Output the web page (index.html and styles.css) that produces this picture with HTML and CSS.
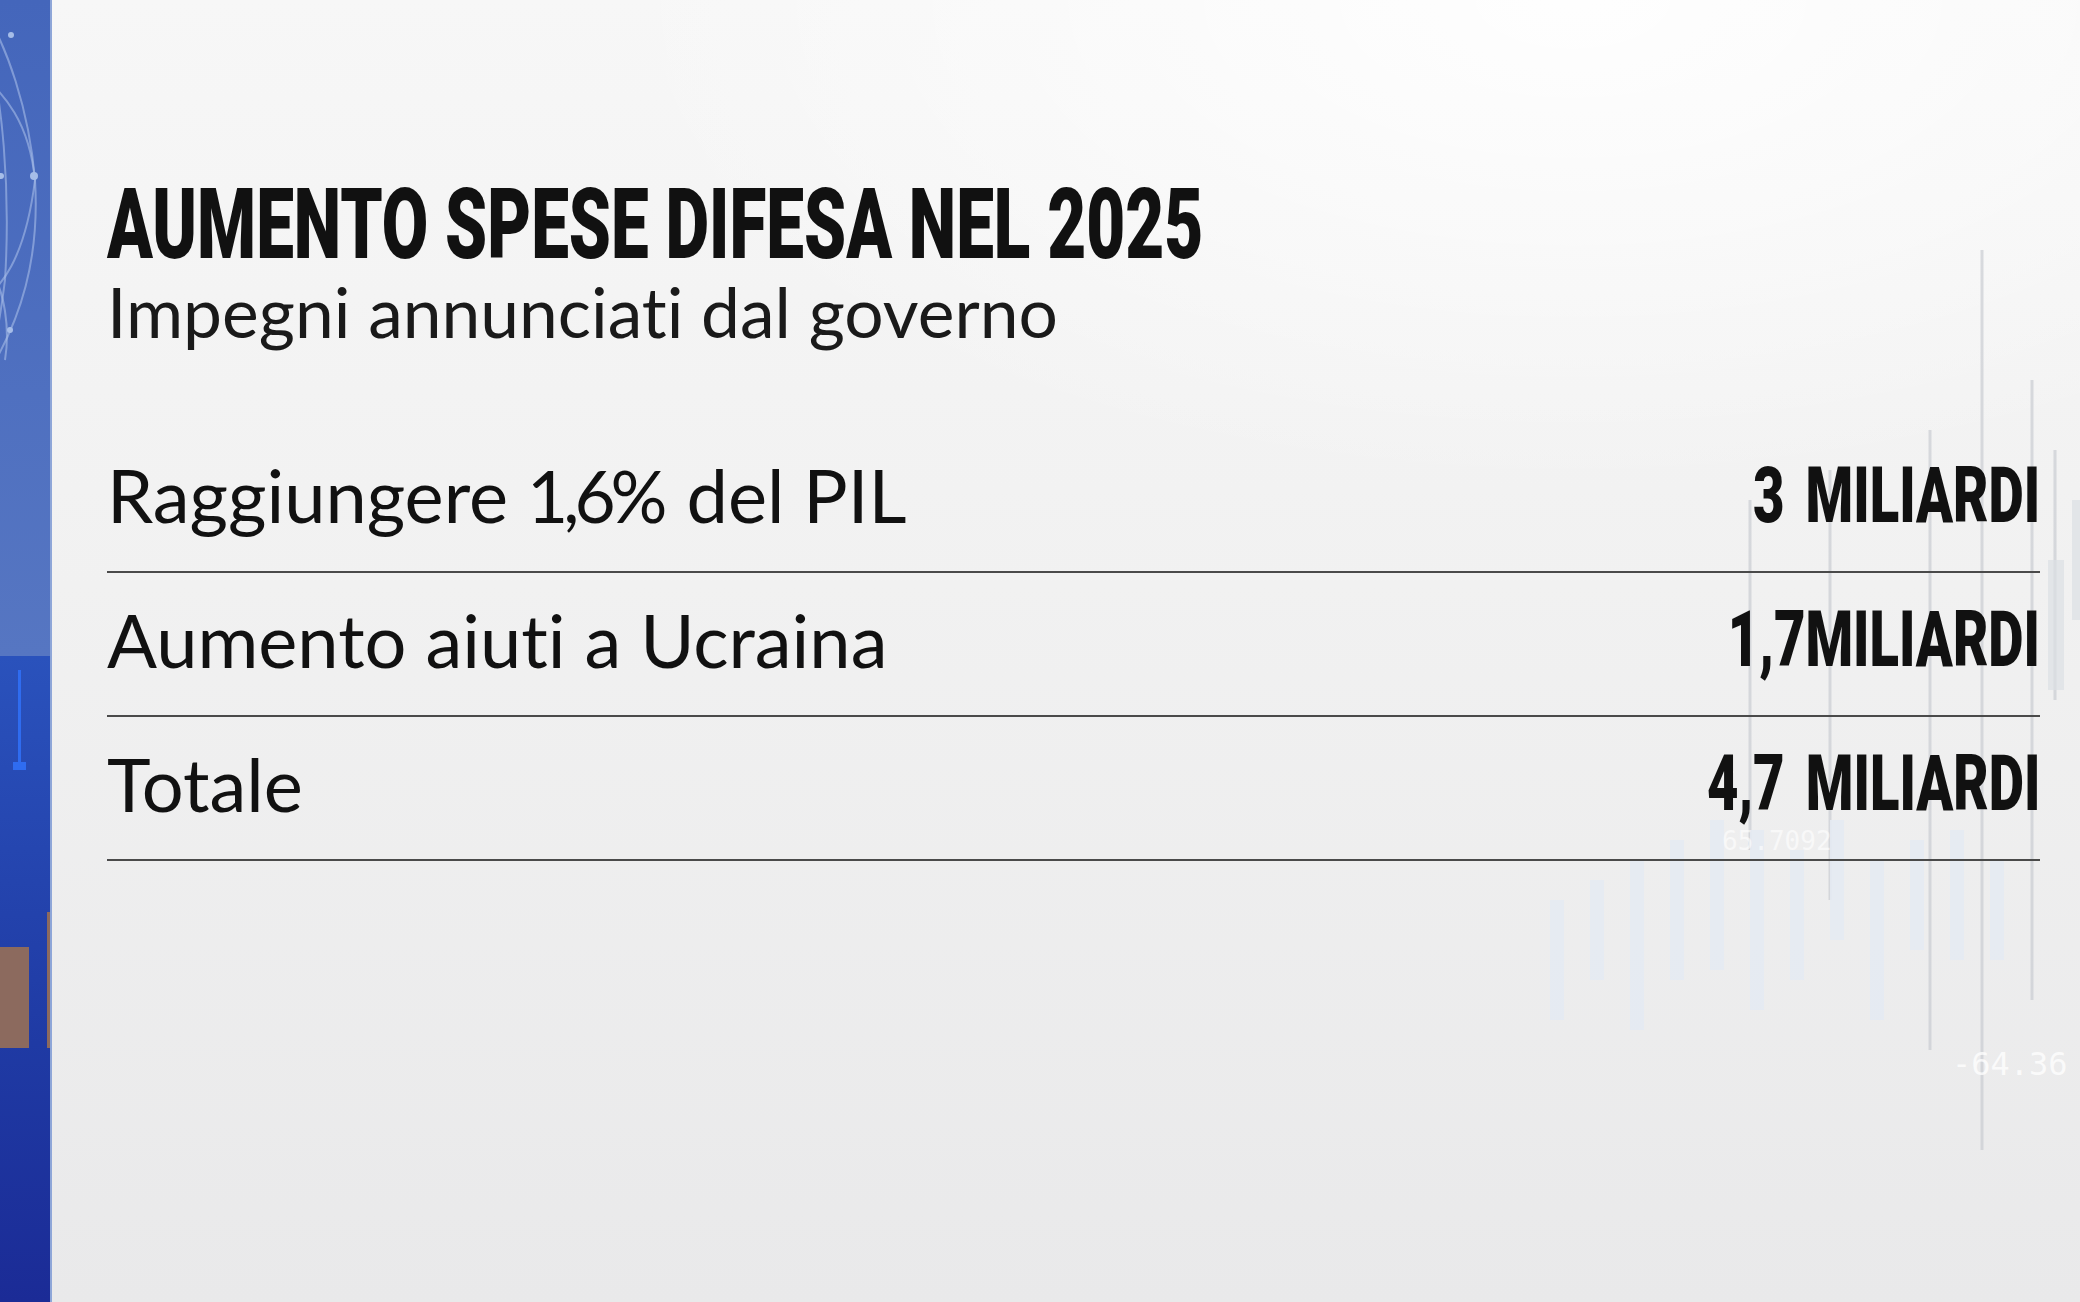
FILE: index.html
```html
<!DOCTYPE html>
<html lang="it">
<head>
<meta charset="utf-8">
<title>Aumento spese difesa nel 2025</title>
<link rel="stylesheet" href="styles.css">
</head>
<body>
<div class="screen">
  <aside class="strip">
    <div class="strip-top">
      <svg class="globe" width="50" height="656" viewBox="0 0 50 656" fill="none" stroke="#a6bde8" stroke-width="2" stroke-opacity="0.6">
        <path d="M-30 -10 C 10 40, 30 120, 35 180 C 40 260, 20 320, -10 370"/>
        <path d="M-40 60 C 10 90, 30 130, 35 180"/>
        <path d="M-20 20 C 5 90, 10 200, 5 280 C 0 320, -5 350, -20 390"/>
        <path d="M-10 270 C 5 290, 10 330, 5 360"/>
        <path d="M-20 300 C 0 290, 25 260, 35 180"/>
        <circle cx="11" cy="35" r="3" fill="#a6bde8" stroke="none"/>
        <circle cx="34" cy="176" r="4" fill="#a6bde8" stroke="none"/>
        <circle cx="1" cy="176" r="3" fill="#a6bde8" stroke="none"/>
        <circle cx="10" cy="330" r="3" fill="#a6bde8" stroke="none"/>
      </svg>
    </div>
    <div class="strip-bottom">
      <span class="marker"></span>
      <span class="brown"></span>
      <span class="brown-edge"></span>
    </div>
  </aside>
  <main class="panel">
    <svg class="chart" width="1030" height="1302" viewBox="0 0 1030 1302" fill="none">
      <g stroke="#c6c9cf" stroke-width="3" stroke-opacity="0.65">
        <line x1="932" y1="250" x2="932" y2="1150"/>
        <line x1="982" y1="380" x2="982" y2="1000"/>
        <line x1="880" y1="430" x2="880" y2="1050"/>
        <line x1="1005" y1="450" x2="1005" y2="700"/>
        <line x1="780" y1="470" x2="780" y2="900"/>
        <line x1="700" y1="500" x2="700" y2="850"/>
      </g>
      <g fill="#dcdfe4" fill-opacity="0.7">
        <rect x="998" y="560" width="16" height="130"/>
        <rect x="1022" y="500" width="8" height="120"/>
      </g>
      <g fill="#e4eaf2" fill-opacity="0.9">
        <rect x="500" y="900" width="14" height="120"/>
        <rect x="540" y="880" width="14" height="100"/>
        <rect x="580" y="860" width="14" height="170"/>
        <rect x="620" y="840" width="14" height="140"/>
        <rect x="660" y="820" width="14" height="150"/>
        <rect x="700" y="830" width="14" height="180"/>
        <rect x="740" y="850" width="14" height="130"/>
        <rect x="780" y="820" width="14" height="120"/>
        <rect x="820" y="860" width="14" height="160"/>
        <rect x="860" y="840" width="14" height="110"/>
        <rect x="900" y="830" width="14" height="130"/>
        <rect x="940" y="860" width="14" height="100"/>
      </g>
      <text x="672" y="850" font-family="DejaVu Sans Mono, monospace" font-size="26" fill="#ffffff" fill-opacity="0.6">65.7092</text>
      <text x="902" y="1075" font-family="DejaVu Sans Mono, monospace" font-size="32" fill="#ffffff" fill-opacity="0.75">-64.36</text>
    </svg>
    <header class="head">
      <h1 class="title"><span>AUMENTO SPESE DIFESA NEL 2025</span></h1>
      <p class="subtitle">Impegni annunciati dal governo</p>
    </header>
    <section class="table">
      <div class="row">
        <span class="label">Raggiungere <span class="num">1,6%</span> del PIL</span>
        <span class="value"><span>3 MILIARDI</span></span>
      </div>
      <div class="row">
        <span class="label">Aumento aiuti a Ucraina</span>
        <span class="value"><span>1,7MILIARDI</span></span>
      </div>
      <div class="row">
        <span class="label">Totale</span>
        <span class="value"><span>4,7 MILIARDI</span></span>
      </div>
    </section>
  </main>
</div>
</body>
</html>
```
FILE: styles.css
```css
* { box-sizing: border-box; }
html, body { margin: 0; padding: 0; }
body {
  width: 2080px;
  height: 1302px;
  overflow: hidden;
  font-family: "Lato", "Open Sans", sans-serif;
  font-variant-ligatures: none;
  color: #111;
}
.screen {
  display: flex;
  width: 2080px;
  height: 1302px;
}
.strip {
  width: 52px;
  flex: none;
  display: flex;
  flex-direction: column;
  border-right: 2px solid #8ea6d8;
}
.strip-top {
  height: 656px;
  background: linear-gradient(180deg, #4466bb 0%, #4f70c0 60%, #5676c2 100%);
  overflow: hidden;
}
.globe { display: block; }
.strip-bottom {
  flex: 1;
  position: relative;
  background: linear-gradient(180deg, #2a52bc 0%, #2546b0 30%, #1f3aa4 60%, #1b2b96 100%);
}
.marker {
  position: absolute;
  left: 18px;
  top: 14px;
  width: 3px;
  height: 100px;
  background: #2f6cf0;
}
.marker::after {
  content: "";
  position: absolute;
  left: -5px;
  bottom: 0;
  width: 13px;
  height: 8px;
  background: #2f6cf0;
}
.brown {
  position: absolute;
  left: 0;
  top: 291px;
  width: 29px;
  height: 101px;
  background: #8c6a5e;
}
.brown-edge {
  position: absolute;
  right: 0;
  top: 256px;
  width: 3px;
  height: 136px;
  background: #8c6a5e;
}
.panel {
  flex: 1;
  position: relative;
  padding: 0 40px 0 55px;
  background:
    radial-gradient(ellipse 1400px 700px at 75% 0%, rgba(255,255,255,0.9), rgba(255,255,255,0) 70%),
    linear-gradient(180deg, #f7f7f7 0%, #f1f1f1 45%, #e9e9ea 100%);
  overflow: hidden;
}
.chart {
  position: absolute;
  right: 0;
  top: 0;
  z-index: 0;
}
.head, .table { position: relative; z-index: 1; }
.head { padding-top: 179px; }
.title {
  margin: 0;
  font-family: "Roboto", sans-serif;
  font-weight: 900;
  font-size: 98px;
  line-height: 92px;
  white-space: nowrap;
}
.title span {
  display: inline-block;
  transform: scaleX(0.6875);
  transform-origin: left center;
}
.subtitle {
  margin: 0;
  font-size: 69.5px;
  line-height: 80px;
  font-weight: 400;
  color: #1a1a1a;
}
.table { margin-top: 80px; }
.row {
  height: 144px;
  display: flex;
  justify-content: space-between;
  align-items: flex-end;
  padding-bottom: 35px;
  border-bottom: 2px solid #4a4a4a;
}
.row:first-child { height: 142px; }
.label {
  font-size: 74px;
  line-height: 80px;
  color: #111;
}
.num { font-size: 71px; letter-spacing: -5px; margin-right: 5px; }
.value {
  font-family: "Roboto", sans-serif;
  font-weight: 900;
  font-size: 78px;
  line-height: 80px;
  white-space: nowrap;
  word-spacing: 11px;
}
.value span {
  display: inline-block;
  transform: scaleX(0.697);
  transform-origin: right center;
}
```
